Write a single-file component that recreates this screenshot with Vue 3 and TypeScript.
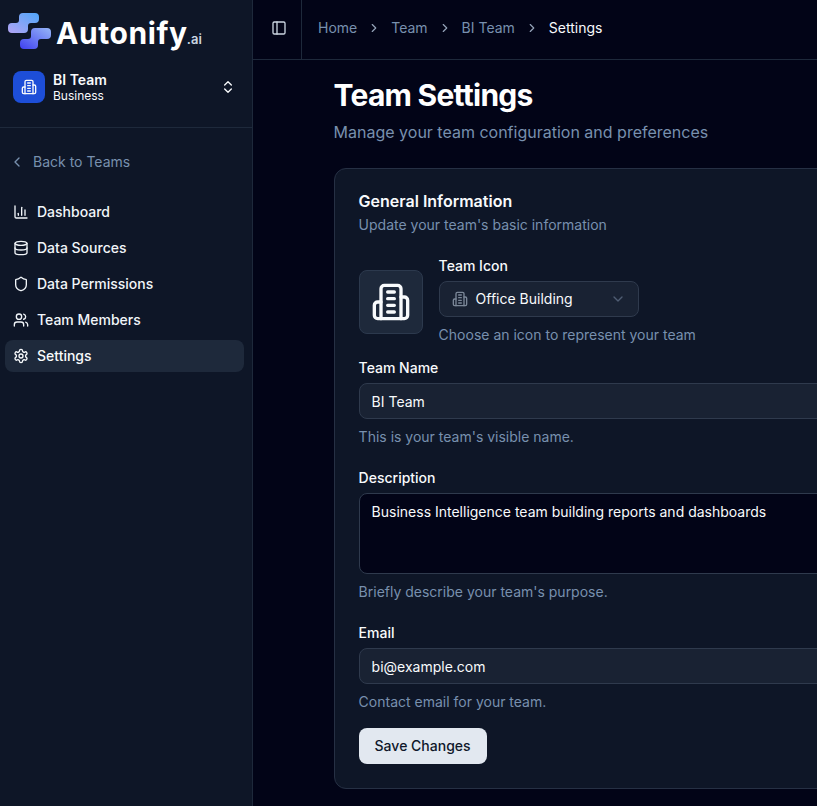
<template>
  <div class="layout">
    <aside class="sidebar">
      <div class="logo">
        <svg class="logo-mark" width="43" height="36" viewBox="0 0 43 36">
          <defs>
            <linearGradient id="lg1" x1="0" y1="1" x2="1" y2="0">
              <stop offset="0" stop-color="#b3a4f3" />
              <stop offset="1" stop-color="#4fa6fa" />
            </linearGradient>
            <linearGradient id="lg2" x1="0" y1="1" x2="1" y2="0">
              <stop offset="0" stop-color="#3f3ff0" />
              <stop offset="1" stop-color="#96b6f7" />
            </linearGradient>
          </defs>
          <path d="M15 0h12a4 4 0 0 1 4 4v2a4 4 0 0 1-4 4h-4a3 3 0 0 0-3 3v3a4 4 0 0 1-4 4H4a4 4 0 0 1-4-4v-2a4 4 0 0 1 4-4h4a3 3 0 0 0 3-3V4a4 4 0 0 1 4-4z" fill="url(#lg1)" />
          <path d="M27 15h12a4 4 0 0 1 4 4v3a4 4 0 0 1-4 4h-6a3 3 0 0 0-3 3v3a4 4 0 0 1-4 4H16a4 4 0 0 1-4-4v-2a4 4 0 0 1 4-4h4a3 3 0 0 0 3-3v-4a4 4 0 0 1 4-4z" fill="url(#lg2)" />
        </svg>
        <span class="logo-name">Autonify</span><span class="logo-ai">.ai</span>
      </div>
      <div class="team-switch">
        <div class="team-badge">
          <svg class="ico" width="16" height="16" viewBox="0 0 24 24"><path d="M6 22V4a2 2 0 0 1 2-2h8a2 2 0 0 1 2 2v18Z" /><path d="M6 12H4a2 2 0 0 0-2 2v6a2 2 0 0 0 2 2h2" /><path d="M18 9h2a2 2 0 0 1 2 2v9a2 2 0 0 1-2 2h-2" /><path d="M10 6h4M10 10h4M10 14h4M10 18h4" /></svg>
        </div>
        <div class="team-text">
          <div class="team-name">BI Team</div>
          <div class="team-plan">Business</div>
        </div>
        <svg class="ico updown" width="16" height="16" viewBox="0 0 24 24"><path d="m7 15 5 5 5-5" /><path d="m7 9 5-5 5 5" /></svg>
      </div>
      <div class="back">
        <svg class="ico" width="16" height="16" viewBox="0 0 24 24"><path d="m15 18-6-6 6-6" /></svg>
        <span>Back to Teams</span>
      </div>
      <nav class="nav">
        <a v-for="item in navItems" :key="item.label" :class="['nav-item', { active: item.active }]">
          <svg class="ico" width="16" height="16" viewBox="0 0 24 24"><path v-for="d in item.paths" :key="d" :d="d" /></svg>
          <span>{{ item.label }}</span>
        </a>
      </nav>
    </aside>

    <div class="main">
      <header class="topbar">
        <div class="toggle">
          <svg class="ico" width="16" height="16" viewBox="0 0 24 24"><rect x="3" y="3" width="18" height="18" rx="2" /><path d="M9 3v18" /></svg>
        </div>
        <div class="crumbs">
          <template v-for="(c, i) in crumbs" :key="c">
            <span :class="i === crumbs.length - 1 ? 'crumb-current' : 'crumb'">{{ c }}</span>
            <svg v-if="i < crumbs.length - 1" class="ico sep" width="14" height="14" viewBox="0 0 24 24"><path d="m9 18 6-6-6-6" /></svg>
          </template>
        </div>
      </header>

      <div class="content">
        <h1>Team Settings</h1>
        <p class="lead">Manage your team configuration and preferences</p>

        <section class="card">
          <h2>General Information</h2>
          <p class="card-sub">Update your team's basic information</p>

          <div class="icon-row">
            <div class="icon-preview">
              <svg class="ico" width="40" height="40" viewBox="0 0 24 24"><path d="M6 22V4a2 2 0 0 1 2-2h8a2 2 0 0 1 2 2v18Z" /><path d="M6 12H4a2 2 0 0 0-2 2v6a2 2 0 0 0 2 2h2" /><path d="M18 9h2a2 2 0 0 1 2 2v9a2 2 0 0 1-2 2h-2" /><path d="M10 6h4M10 10h4M10 14h4M10 18h4" /></svg>
            </div>
            <div class="icon-field">
              <label>Team Icon</label>
              <div class="select">
                <svg class="ico select-ico" width="16" height="16" viewBox="0 0 24 24"><path d="M6 22V4a2 2 0 0 1 2-2h8a2 2 0 0 1 2 2v18Z" /><path d="M6 12H4a2 2 0 0 0-2 2v6a2 2 0 0 0 2 2h2" /><path d="M18 9h2a2 2 0 0 1 2 2v9a2 2 0 0 1-2 2h-2" /><path d="M10 6h4M10 10h4M10 14h4M10 18h4" /></svg>
                <span>Office Building</span>
                <svg class="ico chev" width="16" height="16" viewBox="0 0 24 24"><path d="m6 9 6 6 6-6" /></svg>
              </div>
              <p class="hint">Choose an icon to represent your team</p>
            </div>
          </div>

          <div class="field">
            <label>Team Name</label>
            <input class="input" value="BI Team" />
            <p class="hint">This is your team's visible name.</p>
          </div>

          <div class="field">
            <label>Description</label>
            <textarea class="textarea" :value="description"></textarea>
            <p class="hint">Briefly describe your team's purpose.</p>
          </div>

          <div class="field">
            <label>Email</label>
            <input class="input" value="bi@example.com" />
            <p class="hint">Contact email for your team.</p>
          </div>

          <button class="save">Save Changes</button>
        </section>
      </div>
    </div>
  </div>
</template>

<script setup lang="ts">
const description = 'Business Intelligence team building reports and dashboards'
const crumbs = ['Home', 'Team', 'BI Team', 'Settings']

const navItems = [
  { label: 'Dashboard', paths: ['M3 3v16a2 2 0 0 0 2 2h16', 'M18 17V9', 'M13 17V5', 'M8 17v-3'] },
  {
    label: 'Data Sources',
    paths: ['M3 5a9 3 0 1 0 18 0a9 3 0 1 0-18 0', 'M3 5v14a9 3 0 0 0 18 0V5', 'M3 12a9 3 0 0 0 18 0']
  },
  {
    label: 'Data Permissions',
    paths: ['M20 13c0 5-3.5 7.5-7.66 8.95a1 1 0 0 1-.67-.01C7.5 20.5 4 18 4 13V6a1 1 0 0 1 1-1c2 0 4.5-1.2 6.24-2.72a1.17 1.17 0 0 1 1.52 0C14.51 3.81 17 5 19 5a1 1 0 0 1 1 1z']
  },
  {
    label: 'Team Members',
    paths: [
      'M16 21v-2a4 4 0 0 0-4-4H6a4 4 0 0 0-4 4v2',
      'M5 7a4 4 0 1 0 8 0a4 4 0 1 0-8 0',
      'M22 21v-2a4 4 0 0 0-3-3.87',
      'M16 3.13a4 4 0 0 1 0 7.75'
    ]
  },
  {
    label: 'Settings',
    active: true,
    paths: [
      'M12.22 2h-.44a2 2 0 0 0-2 2v.18a2 2 0 0 1-1 1.73l-.43.25a2 2 0 0 1-2 0l-.15-.08a2 2 0 0 0-2.73.73l-.22.38a2 2 0 0 0 .73 2.73l.15.1a2 2 0 0 1 1 1.72v.51a2 2 0 0 1-1 1.74l-.15.09a2 2 0 0 0-.73 2.73l.22.38a2 2 0 0 0 2.73.73l.15-.08a2 2 0 0 1 2 0l.43.25a2 2 0 0 1 1 1.73V20a2 2 0 0 0 2 2h.44a2 2 0 0 0 2-2v-.18a2 2 0 0 1 1-1.73l.43-.25a2 2 0 0 1 2 0l.15.08a2 2 0 0 0 2.73-.73l.22-.39a2 2 0 0 0-.73-2.73l-.15-.08a2 2 0 0 1-1-1.74v-.5a2 2 0 0 1 1-1.74l.15-.09a2 2 0 0 0 .73-2.73l-.22-.38a2 2 0 0 0-2.73-.73l-.15.08a2 2 0 0 1-2 0l-.43-.25a2 2 0 0 1-1-1.73V4a2 2 0 0 0-2-2z',
      'M9 12a3 3 0 1 0 6 0a3 3 0 1 0-6 0'
    ]
  }
]
</script>

<style>
html,
body {
  margin: 0;
  height: 100%;
  overflow: hidden;
  background: #020417;
}
</style>

<style scoped>
* {
  box-sizing: border-box;
}

.layout {
  display: flex;
  height: 806px;
  width: 817px;
  overflow: hidden;
  font-family: Inter, "Liberation Sans", sans-serif;
  font-size: 14px;
  line-height: 20px;
  color: #f8fafc;
  background: #020417;
}

.ico {
  fill: none;
  stroke: currentColor;
  stroke-width: 2;
  stroke-linecap: round;
  stroke-linejoin: round;
  flex-shrink: 0;
}

.sidebar {
  width: 253px;
  flex-shrink: 0;
  background: #0e1627;
  border-right: 1px solid #1e293b;
}

.logo {
  height: 52px;
  display: flex;
  align-items: baseline;
  padding-left: 8px;
}

.logo-mark {
  align-self: flex-start;
  margin-top: 13px;
  margin-right: 5px;
}

.logo-name {
  font-size: 30px;
  line-height: 66px;
  font-weight: 700;
  letter-spacing: 0.6px;
  color: #fff;
}

.logo-ai {
  font-size: 13px;
  font-weight: 600;
  color: #cbd5e1;
  margin-left: -1px;
}

.team-switch {
  height: 76px;
  display: flex;
  align-items: flex-start;
  padding: 19px 16px 0 13px;
  border-bottom: 1px solid #1e293b;
  gap: 8px;
}

.team-badge {
  width: 32px;
  height: 32px;
  border-radius: 8px;
  background: #1d4ed8;
  display: flex;
  align-items: center;
  justify-content: center;
}

.team-text {
  flex: 1;
  line-height: 16px;
  padding-top: 1px;
}

.team-name {
  font-size: 14px;
  font-weight: 600;
}

.team-plan {
  font-size: 12px;
}

.updown {
  margin-top: 8px;
}

.back {
  display: flex;
  align-items: center;
  gap: 8px;
  margin-top: 24px;
  padding-left: 9px;
  height: 20px;
  color: #7890ae;
}

.nav {
  display: flex;
  flex-direction: column;
  gap: 4px;
  margin-top: 24px;
  padding: 0 8px 0 5px;
}

.nav-item {
  height: 32px;
  display: flex;
  align-items: center;
  gap: 8px;
  padding: 0 8px;
  border-radius: 8px;
  font-weight: 500;
  color: #f1f5f9;
}

.nav-item.active {
  background: #1e293b;
  color: #f8fafc;
}

.main {
  flex: 1;
  min-width: 0;
}

.topbar {
  height: 60px;
  display: flex;
  align-items: stretch;
  border-bottom: 1px solid #1e293b;
}

.toggle {
  width: 49px;
  display: flex;
  align-items: center;
  padding: 0 0 3px 18px;
  border-right: 1px solid #1e293b;
  color: #cbd5e1;
}

.crumbs {
  display: flex;
  align-items: center;
  gap: 10px;
  padding: 0 0 3px 16px;
}

.crumb {
  color: #7890ae;
}

.crumb-current {
  color: #f8fafc;
}

.sep {
  color: #94a3b8;
}

.content {
  padding: 17px 0 0 80.6px;
}

h1 {
  margin: 0;
  font-size: 30px;
  line-height: 36px;
  font-weight: 700;
  letter-spacing: -0.75px;
  color: #fff;
}

.lead {
  margin: 7px 0 0;
  font-size: 16px;
  line-height: 24px;
  color: #7890ae;
}

.card {
  margin-top: 24px;
  width: 800px;
  padding: 22px 24px 24px;
  background: #0e1627;
  border: 1px solid #263044;
  border-radius: 12px;
}

h2 {
  margin: 0;
  font-size: 16px;
  line-height: 20px;
  font-weight: 600;
}

.card-sub {
  margin: 4px 0 0;
  color: #7890ae;
}

label {
  display: block;
  font-weight: 500;
  line-height: 20px;
}

.hint {
  margin: 8px 0 0;
  color: #7890ae;
}

.icon-row {
  display: flex;
  gap: 16px;
  margin-top: 21px;
}

.icon-preview {
  width: 64px;
  height: 64px;
  margin-top: 14px;
  border-radius: 8px;
  background: #1e293b;
  border: 1px solid #2c394d;
  display: flex;
  align-items: center;
  justify-content: center;
}

.select {
  margin-top: 5px;
  width: 200px;
  height: 36px;
  display: flex;
  align-items: center;
  gap: 8px;
  padding: 0 12px;
  background: #192233;
  border: 1px solid #2f3a4d;
  border-radius: 8px;
}

.select-ico {
  color: #7b8798;
}

.chev {
  margin-left: auto;
  color: #4f5d73;
}

.field {
  margin-top: 13px;
}

.field + .field {
  margin-top: 21px;
}

.input {
  display: block;
  width: 100%;
  height: 36px;
  margin-top: 5px;
  padding: 0 12px;
  font: inherit;
  color: #f8fafc;
  background: #192233;
  border: 1px solid #2f3a4d;
  border-radius: 8px;
  outline: none;
}

.textarea {
  display: block;
  width: 100%;
  height: 81px;
  margin-top: 5px;
  padding: 8px 12px;
  font: inherit;
  color: #f8fafc;
  background: #020417;
  border: 1px solid #2f3a4d;
  border-radius: 8px;
  outline: none;
  resize: none;
}

.save {
  display: block;
  margin-top: 16px;
  width: 128px;
  height: 36px;
  padding: 0;
  font: inherit;
  font-weight: 500;
  color: #0f172a;
  background: #e2e8f0;
  border: none;
  border-radius: 8px;
}
</style>
